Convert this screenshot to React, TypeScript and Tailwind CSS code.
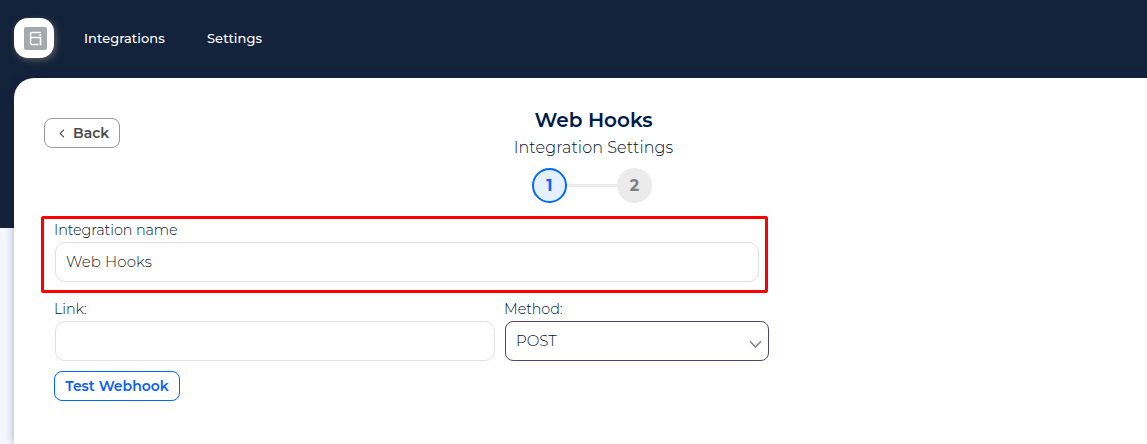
import React from 'react';

function Logo() {
  return (
    <div className="flex size-10 items-center justify-center rounded-[14px] bg-white shadow-[2px_2px_6px_rgba(255,225,170,0.3)]">
      <svg width="23" height="23" viewBox="0 0 23 23" fill="none" className="ml-[3px] mt-px">
        <rect width="23" height="23" rx="2" fill="#a5a9ac" />
        <path
          d="M17 5.5H8Q6.5 5.5 6.5 7V9Q6.5 10.5 8 10.5H13M8 10.5Q6.5 10.5 6.5 12V15.8Q6.5 17.5 8 17.5H14.4"
          stroke="white"
          strokeWidth="1.4"
        />
        <path d="M12.5 10.5H16.5V18.2M15.3 8H17.2" stroke="white" strokeWidth="1.6" />
      </svg>
    </div>
  );
}

function Header() {
  return (
    <header className="flex h-[78px] items-center pl-[14px] pb-[2px]">
      <Logo />
      <nav className="flex pl-[30px] text-[13px] leading-5 font-medium tracking-[0.05px] text-white">
        <a className="w-[123px]">Integrations</a>
        <a>Settings</a>
      </nav>
    </header>
  );
}

function Steps() {
  return (
    <div className="mt-[8px] mr-1 flex items-center text-[16px] font-bold">
      <span className="flex size-[35px] items-center justify-center rounded-full border-2 border-[#0069ff] bg-[#e5f0ff] pl-px text-[#1463f3]">1</span>
      <span className="h-[3px] w-[50px] bg-[#ebebeb]" />
      <span className="flex size-[35px] items-center justify-center rounded-full bg-[#ebebeb] pl-px text-[#808080]">2</span>
    </div>
  );
}

export default function App() {
  return (
    <div className="h-[444px] w-full overflow-hidden bg-[linear-gradient(#14233c_228px,#f4f7ff_228px)] font-['Montserrat','Inter',sans-serif]">
      <Header />
      <main className="ml-[14px] h-[366px] w-[1159px] rounded-tl-[20px] bg-white px-[30px] shadow-[0_0_10px_rgba(20,10,60,0.32)]">
        <div className="grid h-[138px] grid-cols-[1fr_auto_1fr]">
          <div className="pt-10">
            <button className="flex h-[30px] w-[76px] items-center rounded-[8px] border border-[#999] pl-[14px] text-[14px] font-semibold text-[#4a4a4a]">
              <svg width="6" height="9" viewBox="0 0 6 9" fill="none" className="mr-2">
                <path d="M5 0.7L1.2 4.5L5 8.3" stroke="#4a4a4a" strokeWidth="1.1" />
              </svg>
              Back
            </button>
          </div>
          <div className="flex flex-col items-center pt-[30px] text-[#001a49]">
            <h1 className="text-[20px] leading-6 font-semibold">Web Hooks</h1>
            <p className="mt-[4px] text-[16px] leading-6 font-light tracking-[0.1px] text-[#00122f]">Integration Settings</p>
            <Steps />
          </div>
          <div />
        </div>
        <form className="ml-[11px] w-[714px] text-[14.4px] font-light text-[#00122f]">
          <section className="relative h-[79px] pt-[5px]">
            <div className="pointer-events-none absolute top-0 left-[-14px] h-[77px] w-[727px] rounded-[2px] border-[3px] border-[#ff0000]" />
            <label className="-ml-px block h-[21px] leading-[18px] tracking-[-0.1px]">Integration name</label>
            <div className="flex h-10 w-[704px] items-center rounded-[10px] border border-[#e0e0e0] pl-[10px] text-[15px] tracking-[0.1px] text-[#202020]">Web Hooks</div>
          </section>
          <div className="flex gap-[10px] pt-[5px]">
            <div className="w-[440px]">
              <label className="-ml-px block h-[21px] leading-[18px] tracking-[-0.1px]">Link:</label>
              <div className="h-10 rounded-[10px] border border-[#e0e0e0]" />
            </div>
            <div className="w-[264px]">
              <label className="-ml-px block h-[21px] leading-[18px] tracking-[-0.1px]">Method:</label>
              <div className="flex h-10 items-center justify-between rounded-[8px] border border-[#4b4480] pr-[6px] pl-[10px] text-[15px]">
                POST
                <svg width="13" height="9" viewBox="0 0 13 9" fill="none" className="mt-[7px]">
                  <path d="M1 1.2L6.5 7L12 1.2" stroke="#888" strokeWidth="1.6" />
                </svg>
              </div>
            </div>
          </div>
          <button type="button" className="mt-[10px] -ml-px flex h-[30px] w-[126px] items-center justify-center rounded-[8px] border border-[#0069ff] text-[14px] font-semibold text-[#0b61f5]">
            Test Webhook
          </button>
        </form>
      </main>
    </div>
  );
}
